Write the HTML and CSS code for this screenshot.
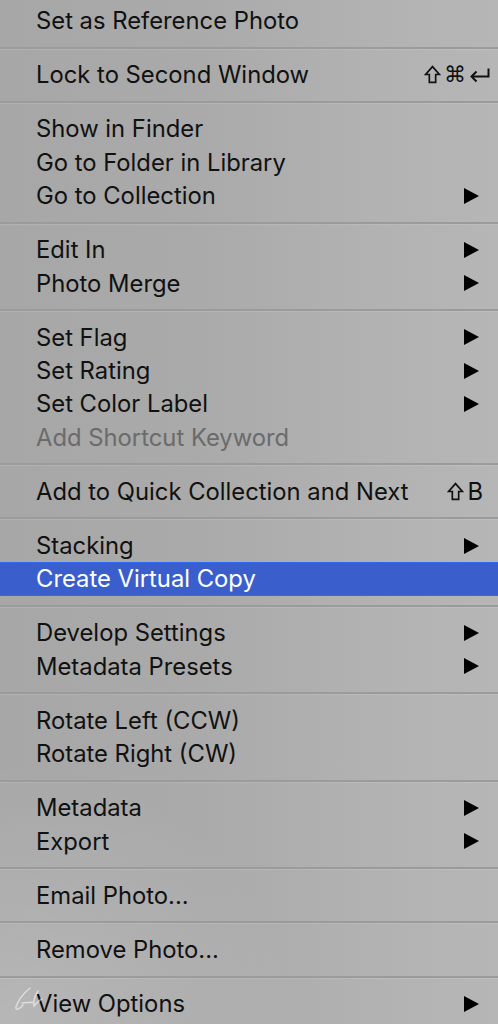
FILE: index.html
```html
<!DOCTYPE html>
<html>
<head>
<meta charset="utf-8">
<link rel="stylesheet" href="styles.css">
</head>
<body>
<div class="menu">
  <div class="item">Set as Reference Photo</div>
  <div class="sep"></div>
  <div class="item">Lock to Second Window
    <span class="keys">
      <svg class="shift" viewBox="0 0 16 18" width="17" height="19"><path d="M8 1.5 L14.5 9 H11 V16.5 H5 V9 H1.5 Z" fill="none" stroke="#111" stroke-width="1.6" stroke-linejoin="miter"/></svg>
      <span class="cmd">⌘</span>
      <svg class="ret" viewBox="0 0 22 16" width="22" height="16"><path d="M19.5 1.5 V9.5 H3" fill="none" stroke="#111" stroke-width="2"/><path d="M7.5 4.5 L2.5 9.5 L7.5 14.5" fill="none" stroke="#111" stroke-width="2"/></svg>
    </span>
  </div>
  <div class="sep"></div>
  <div class="item">Show in Finder</div>
  <div class="item">Go to Folder in Library</div>
  <div class="item">Go to Collection<span class="arrow"></span></div>
  <div class="sep"></div>
  <div class="item">Edit In<span class="arrow"></span></div>
  <div class="item">Photo Merge<span class="arrow"></span></div>
  <div class="sep"></div>
  <div class="item">Set Flag<span class="arrow"></span></div>
  <div class="item">Set Rating<span class="arrow"></span></div>
  <div class="item">Set Color Label<span class="arrow"></span></div>
  <div class="item disabled">Add Shortcut Keyword</div>
  <div class="sep"></div>
  <div class="item">Add to Quick Collection and Next
    <span class="keys keys-b">
      <svg class="shift" viewBox="0 0 16 18" width="17" height="19"><path d="M8 1.5 L14.5 9 H11 V16.5 H5 V9 H1.5 Z" fill="none" stroke="#111" stroke-width="1.6"/></svg>
      <span class="b">B</span>
    </span>
  </div>
  <div class="sep"></div>
  <div class="item">Stacking<span class="arrow"></span></div>
  <div class="item active">Create Virtual Copy</div>
  <div class="sep"></div>
  <div class="item">Develop Settings<span class="arrow"></span></div>
  <div class="item">Metadata Presets<span class="arrow"></span></div>
  <div class="sep"></div>
  <div class="item">Rotate Left (CCW)</div>
  <div class="item">Rotate Right (CW)</div>
  <div class="sep"></div>
  <div class="item">Metadata<span class="arrow"></span></div>
  <div class="item">Export<span class="arrow"></span></div>
  <div class="sep"></div>
  <div class="item">Email Photo...</div>
  <div class="sep"></div>
  <div class="item">Remove Photo...</div>
  <div class="sep"></div>
  <div class="item">View Options<span class="arrow"></span>
    <svg class="mark" viewBox="0 0 60 30" width="60" height="30"><path d="M26 3 C20 8 14 16 12 22 C11 26 16 24 19 20 M18 18 C22 17 26 18 30 17 M34 6 C31 11 29 17 30 21 C32 19 35 15 38 14" fill="none" stroke="rgba(255,255,255,0.55)" stroke-width="1.5" stroke-linecap="round"/></svg>
  </div>
</div>
</body>
</html>
```
FILE: styles.css
```css
html, body {
  margin: 0;
  padding: 0;
  height: 100%;
}
body {
  width: 498px;
  height: 1024px;
  overflow: hidden;
  background:
    radial-gradient(ellipse 300px 260px at 0px 1024px, rgba(255,255,255,0.18), rgba(255,255,255,0) 100%),
    linear-gradient(90deg, #a7a7a7 0%, #aaaaaa 40%, #b3b3b3 80%, #b6b6b6 100%);
  font-family: Inter, "Liberation Sans", Arial, sans-serif;
}
.menu {
  display: flex;
  flex-direction: column;
  padding-top: 4px;
}
.item {
  position: relative;
  height: 33.4px;
  display: flex;
  align-items: center;
  justify-content: space-between;
  padding-left: 36px;
  padding-right: 19px;
  font-size: 23.8px;
  color: #111;
  white-space: nowrap;
}
.item.disabled {
  color: #6b6b6b;
}
.item.active {
  background: #3a5fcd;
  color: #fff;
  box-shadow: inset 0 1px 0 #2e6af2, inset 0 -1px 0 #2e6af2;
}
.sep {
  height: 20.7px;
  display: flex;
  align-items: center;
}
.sep::before {
  content: "";
  display: block;
  width: 100%;
  height: 2px;
  background: #9b9b9b;
  box-shadow: 0 1px 0 rgba(255,255,255,0.12);
}
.arrow {
  width: 0;
  height: 0;
  border-top: 8px solid transparent;
  border-bottom: 8px solid transparent;
  border-left: 15px solid #000;
}
.keys {
  display: flex;
  align-items: center;
  gap: 3px;
  margin-right: -12px;
}
.keys-b {
  margin-right: -4px;
}
.cmd {
  font-family: "DejaVu Sans", sans-serif;
  font-size: 22px;
  color: #111;
}
.b {
  font-size: 23.8px;
  color: #111;
}
.mark {
  position: absolute;
  left: 4px;
  top: -2px;
  pointer-events: none;
}
```
